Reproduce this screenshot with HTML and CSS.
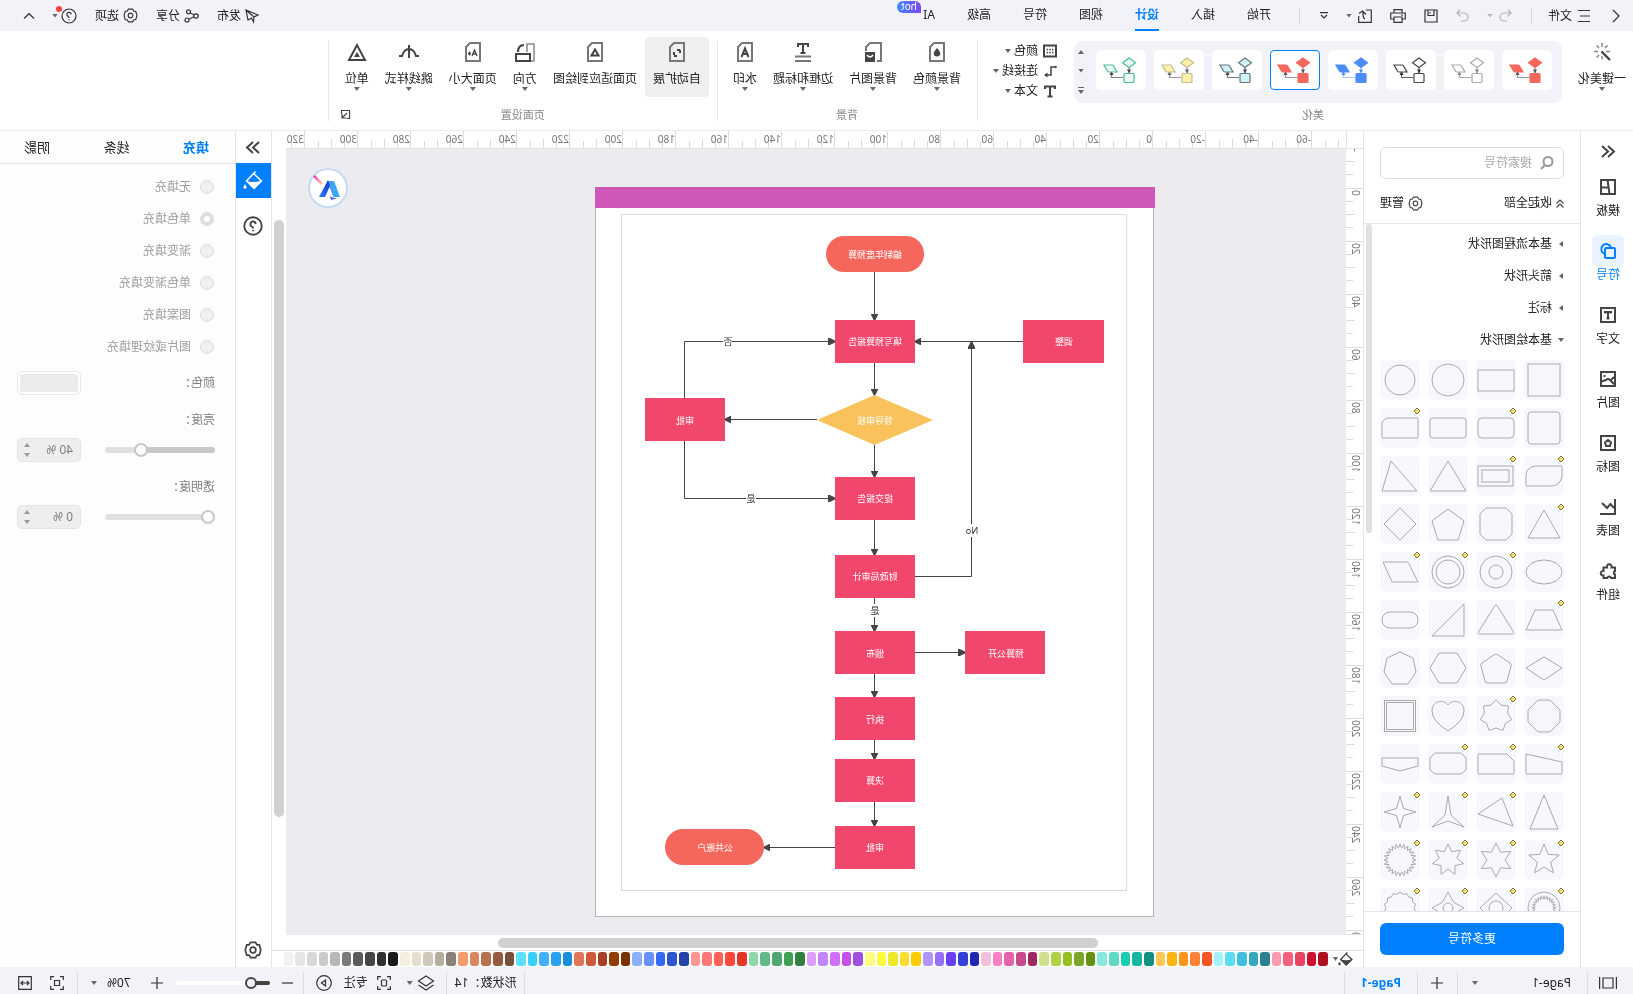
FILE: index.html
```html
<!DOCTYPE html>
<html lang="zh-CN">
<head>
<meta charset="utf-8">
<title>Page-1</title>
<link rel="stylesheet" href="styles.css">
</head>
<body>
<svg class="defs" aria-hidden="true">
  <symbol id="theme" viewBox="0 0 50 40">
    <g class="theme-line"><path d="M17 17V23M23 27.500H34.500V22"/><path class="theme-head" d="M15 19.500h4L17 23.500zM32.500 25h4L34.500 21z"/></g>
    <g class="theme-shape"><path d="M17 8l6.500 4.800L17 17.600l-6.500-4.800z"/><rect x="12" y="23.500" width="10" height="9" rx="1"/><path d="M42 15h-8q-1 0-1.500 1l-3.500 6h8q1 0 1.500-1z"/></g>
  </symbol>
  <symbol id="gear" viewBox="0 0 16 16"><path d="M5.800 1.200h4.400l1.400 2.300h2l1.300 4.500-1.300 4.500h-2l-1.400 2.300H5.800l-1.400-2.300h-2L1.100 8l1.300-4.500h2z"/><circle cx="8" cy="8" r="2.500"/></symbol>
  <symbol id="help" viewBox="0 0 16 16"><circle cx="8" cy="8" r="7"/><path d="M5.900 6.500a2.100 2.100 0 1 1 3 1.900q-.9.500-.9 1.500M8 11.200v1"/></symbol>
  <symbol id="sheet" viewBox="0 0 16 20"><path d="M1 1h10l4 4v14H1z"/></symbol>
  <symbol id="bucket" viewBox="0 0 20 20"><path d="M7.500 .5l2 2.500M9.500 2.500l7 7.500-7.500 7.500L1.500 10z"/><path class="solid" d="M2 9.500q7 3 15 0L9 18z"/><path class="solid" d="M18 13l1.400 2.400a1.600 1.600 0 1 1-2.800 0z"/></symbol>
</svg>

<div class="app">
  <header class="titlebar">
    <button class="icon-btn back" aria-label="返回"><svg width="8" height="12" viewBox="0 0 8 12"><path d="M7 0L1 6l6 6"/></svg></button>
    <button class="file-btn"><svg width="12" height="12" viewBox="0 0 12 12"><path d="M0 .5h12M0 6h10M0 11.500h12"/></svg>文件</button>
    <i class="sep"></i>
    <div class="quick">
      <button class="icon-btn pale" aria-label="撤销"><svg width="13" height="13" viewBox="0 0 13 13"><path d="M4 .5L1 4l3.500 3.500M1 4h7a4 4 0 0 1 0 8H5"/></svg><i class="caret"></i></button>
      <button class="icon-btn pale" aria-label="重做"><svg width="13" height="13" viewBox="0 0 13 13"><path d="M9 .5L12 4 8.500 7.500M12 4H5a4 4 0 0 0 0 8h3"/></svg></button>
      <button class="icon-btn" aria-label="保存"><svg width="14" height="14" viewBox="0 0 14 14"><path d="M1 1h12v12H1zM4 1v5.500h6V1M8 3v1.500"/></svg></button>
      <button class="icon-btn" aria-label="打印"><svg width="16" height="14" viewBox="0 0 16 14"><path d="M4 4V.7h8V4M4 10H.7V4h14.600v6H12M4 8h8v5.300H4zM3 6h2"/></svg></button>
      <button class="icon-btn" aria-label="导出"><svg width="14" height="14" viewBox="0 0 14 14"><path d="M6 1H.7v12.300h12.600V7M7 10q2-1 2-4.500V3M6 5.500L9.500 2 13 4.500"/></svg><i class="caret"></i></button>
      <button class="icon-btn" aria-label="更多"><svg width="8" height="7" viewBox="0 0 8 7"><path d="M0 .6h8M1 3l3 3 3-3"/></svg></button>
    </div>
    <i class="sep"></i>
    <nav class="tabs">
      <a href="#">开始</a><a href="#">插入</a><a href="#" class="active">设计</a><a href="#">视图</a><a href="#">符号</a><a href="#">高级</a><a href="#" class="ai">AI<span class="hot">hot</span></a>
    </nav>
    <div class="title-actions">
      <button><svg width="14" height="14" viewBox="0 0 14 14"><path d="M1 6L13 1 11 11 7.500 9 5.500 13 5 8zM13 1L5 8"/></svg>发布</button>
      <button><svg width="15" height="14" viewBox="0 0 15 14"><circle cx="3" cy="7" r="2.200"/><circle cx="10.500" cy="2.800" r="2"/><circle cx="12" cy="11" r="2"/><path d="M5 6l3.500-2M5 7.800l5 2.400"/></svg>分享</button>
      <button><svg width="15" height="15"><use href="#gear"/></svg>选项</button>
      <button class="help" aria-label="帮助"><svg width="16" height="16"><use href="#help"/></svg><i class="caret"></i><i class="dot"></i></button>
      <button aria-label="收起"><svg width="10" height="6" viewBox="0 0 10 6"><path d="M0 5.500L5 .7l5 4.800"/></svg></button>
    </div>
  </header>

  <section class="ribbon">
    <div class="group">
      <div class="group-body">
        <button class="tool beautify"><svg width="18" height="20" viewBox="0 0 18 20"><path d="M1 18L9.500 9.500" stroke-width="2.400"/><path d="M9 1v4M3.500 3.500L6 6M1 9.500h4M14.500 3.500L12 6M13 9.500h4M14.500 15.500L12 13M9 14v3.500" class="soft"/></svg>一键美化<i class="caret"></i></button>
        <div class="gallery">
          <button class="theme t-red" aria-label="主题1"><svg><use href="#theme"/></svg></button>
          <button class="theme t-light" aria-label="主题2"><svg><use href="#theme"/></svg></button>
          <button class="theme t-dark" aria-label="主题3"><svg><use href="#theme"/></svg></button>
          <button class="theme t-blue" aria-label="主题4"><svg><use href="#theme"/></svg></button>
          <button class="theme t-red selected" aria-label="主题5"><svg><use href="#theme"/></svg></button>
          <button class="theme t-cyan" aria-label="主题6"><svg><use href="#theme"/></svg></button>
          <button class="theme t-yellow" aria-label="主题7"><svg><use href="#theme"/></svg></button>
          <button class="theme t-green" aria-label="主题8"><svg><use href="#theme"/></svg></button>
          <div class="gallery-nav"><button class="caret up" aria-label="上"></button><button class="caret" aria-label="下"></button><button class="caret expand" aria-label="展开"></button></div>
        </div>
        <div class="stack">
          <button><svg width="14" height="14" viewBox="0 0 14 14"><path d="M1 1.500h12v11H1z" stroke-width="2"/><path d="M3.500 5.500h7M3.500 8.500h7" stroke-dasharray="1.500 1.200" stroke-width="1.500"/></svg>颜色<i class="caret"></i></button>
          <button><svg width="14" height="14" viewBox="0 0 14 14"><path d="M2.500 3H6v8h4" stroke-width="1.500"/><circle cx="1.500" cy="3" r="1.300" class="solid"/><path class="solid" d="M9.500 8.500l3.500 2.500-3.500 2.500z"/></svg>连接线<i class="caret"></i></button>
          <button><svg width="14" height="14" viewBox="0 0 14 14"><path d="M2 5V2.500h10V5M7 2v10M4.500 12.500h5" stroke-width="2"/></svg>文本<i class="caret"></i></button>
        </div>
      </div>
      <h2>美化</h2>
    </div>
    <div class="group">
      <div class="group-body">
        <button class="tool"><svg width="16" height="20"><use href="#sheet"/><path class="solid" d="M8 6q3.200 3.600 3.200 5.300a3.200 3.200 0 0 1-6.400 0Q4.800 9.600 8 6z"/></svg>背景颜色<i class="caret"></i></button>
        <button class="tool"><svg width="18" height="20" viewBox="0 0 18 20"><path class="mid" d="M5 19H1V1h11l4 4v4"/><path class="solid" d="M7 10h10v10H7z"/><path d="M9 13q3 4 6 0" stroke="#fff" stroke-width="1.500"/></svg>背景图片<i class="caret"></i></button>
        <button class="tool"><svg width="18" height="20" viewBox="0 0 18 20"><path d="M4 5V2h10v3M9 2v9M6.500 11h5"/><path class="mid" d="M1 14.500h16M1 19h16"/></svg>边框和标题<i class="caret"></i></button>
        <button class="tool"><svg width="16" height="20"><use href="#sheet"/><path d="M4.500 15L8 6.500l3.500 8.500M6 12h4"/></svg>水印<i class="caret"></i></button>
      </div>
      <h2>背景</h2>
    </div>
    <div class="group page-group">
      <div class="group-body">
        <button class="tool on"><svg width="16" height="20"><use href="#sheet"/><path d="M5 13v-3M11 8v3M11 8H8M5 14h3" transform="matrix(-1 0 0 1 16 0)"/></svg>自动扩展</button>
        <button class="tool"><svg width="16" height="20"><use href="#sheet"/><path d="M8 7.500l3.500 6h-7z"/></svg>页面适应到绘图</button>
        <button class="tool"><svg width="20" height="20" viewBox="0 0 20 20"><path class="soft" d="M5 19H1V2h7v8"/><path d="M5 12h14v7H5zM11 3q6 0 6 7"/></svg>方向<i class="caret"></i></button>
        <button class="tool"><svg width="16" height="20"><use href="#sheet"/><path d="M4 14l2.500-6L9 14M5 12h3M10 11.500h3M11.500 9.500v4" stroke-width="1.300"/></svg>页面大小<i class="caret"></i></button>
        <button class="tool"><svg width="20" height="20" viewBox="0 0 20 20"><path d="M0 14h3q2-7 7-7t7 7h3M10 3v13"/></svg>跳线样式<i class="caret"></i></button>
        <button class="tool"><svg width="20" height="20" viewBox="0 0 20 20"><path d="M10 3l8 15H2z"/><path class="solid" d="M10 10l3 5H7z"/></svg>单位<i class="caret"></i></button>
      </div>
      <h2>页面设置</h2>
      <button class="launcher" aria-label="页面设置对话框"><svg width="9" height="9" viewBox="0 0 9 9"><path d="M4 .5H.5v8h3M4 .5h4.500V4M3 3l4.500 4.500M8 4v4H4"/></svg></button>
    </div>
  </section>

  <main class="main">
    <nav class="rail">
      <button class="fold" aria-label="折叠"><svg width="14" height="13" viewBox="0 0 14 13"><path d="M7 1L1 6.500 7 12M13 1L7 6.500l6 5.500"/></svg></button>
      <button class="rail-item"><span><svg viewBox="0 0 16 16"><path d="M1 1h14v14H1zM8.500 1L6.500 15M8 8.500h7"/></svg></span>模板</button>
      <button class="rail-item active"><span><svg viewBox="0 0 16 16"><rect x="1" y="5" width="10" height="10" rx="1"/><path d="M5 4.500a5 5 0 1 1 6.500 6.300"/></svg></span>符号</button>
      <button class="rail-item"><span><svg viewBox="0 0 16 16"><path d="M1 1h14v14H1zM5 6.500V5h6v1.500M8 5v6.500M6.500 11.500h3"/></svg></span>文字</button>
      <button class="rail-item"><span><svg viewBox="0 0 16 16"><path d="M1 1h14v14H1zM2 6l4 4M2 13l4-4q2-2 4 0l5 1.500M11.500 4v2"/></svg></span>图片</button>
      <button class="rail-item"><span><svg viewBox="0 0 16 16"><path d="M1 1h14v14H1zM8 5l3 2.300-1 3.700H6L5 7.300z"/></svg></span>图标</button>
      <button class="rail-item"><span><svg viewBox="0 0 16 16"><path d="M1 0v15h15M2 9l3.500-4 3.500 4 5-5"/></svg></span>图表</button>
      <button class="rail-item"><span><svg viewBox="0 0 16 16"><path d="M2 4.500h3.500a2.400 2.400 0 1 1 4.500 0h3.500V8a2.300 2.300 0 1 1 0 4.500V15H9.700a2 2 0 0 0-3.800 0H2v-3.500a1.900 1.900 0 0 0 0-3.500z" transform="translate(-1 0)"/></svg></span>组件</button>
    </nav>

    <aside class="symbols">
      <div class="symbols-top">
        <label class="search"><svg width="14" height="14" viewBox="0 0 14 14"><circle cx="6" cy="5.500" r="4.500"/><path d="M9 9l4 4"/></svg><input type="text" placeholder="搜索符号" aria-label="搜索符号"></label>
        <div class="symbols-actions">
          <button><svg width="8" height="9" viewBox="0 0 8 9"><path d="M.5 4.500L4 1l3.500 3.500M.5 8.500L4 5l3.500 3.500"/></svg>收起全部</button>
          <button><svg width="15" height="15"><use href="#gear"/></svg>管理</button>
        </div>
      </div>
      <div class="library">
        <div class="library-list">
          <button class="cat"><i></i>基本流程图形状</button>
          <button class="cat"><i></i>箭头形状</button>
          <button class="cat"><i></i>标注</button>
          <button class="cat open"><i></i>基本绘图形状</button>
          <div class="tiles" id="tiles"></div>
        </div>
        <i class="thumb"></i>
      </div>
      <div class="more"><button>更多符号</button></div>
    </aside>

    <section class="workspace">
      <i class="corner"></i>
      <div class="ruler-h"><div class="ticks" id="ruler-h"></div></div>
      <div class="ruler-v"><div class="ticks" id="ruler-v"></div></div>
      <div class="canvas">
        <svg class="page" width="560" height="731" viewBox="0 0 560 731">
          <defs><marker id="arrow" viewBox="0 0 7 7" refX="6.500" refY="3.500" markerWidth="7" markerHeight="7" markerUnits="userSpaceOnUse" orient="auto"><path d="M0 0l7 3.500L0 7z" fill="#444"/></marker></defs>
          <rect x=".5" y=".5" width="558" height="729" fill="#fff" stroke="#b4b4b8"/>
          <rect x="27.500" y="27.500" width="505" height="676" fill="none" stroke="#dcdcdc"/>
          <g fill="#cf57b6"><rect x="-1" width="560" height="21"/></g>
          <g class="wires">
            <path d="M279.500 85V133"/><path d="M279.500 176V208"/><path d="M279.500 258V290"/><path d="M279.500 333V368"/><path d="M279.500 411V444"/><path d="M279.500 487V510"/><path d="M279.500 553V572"/><path d="M279.500 615V639"/>
            <path d="M131 154.500H239"/><path d="M337 232.500H429"/><path d="M469.500 211V154.500H319"/><path d="M469.500 254V311.500H319"/><path d="M239 389.500H182.500V155"/><path d="M239 465.500H189"/><path d="M319 660.500H390"/>
          </g>
          <g fill="#fff"><rect x="422" y="148" width="9" height="13"/><rect x="398" y="305" width="10" height="13"/><rect x="274" y="417" width="11" height="13"/><rect x="175" y="337" width="15" height="13"/></g>
          <g fill="#f5665d"><rect x="230" y="49" width="98" height="36" rx="18"/><rect x="390" y="642" width="99" height="36" rx="18"/></g>
          <path d="M279.500 208L337 233l-57.500 25L221 233z" fill="#f9c25c"/>
          <g fill="#f2476c"><rect x="50" y="133" width="81" height="43"/><rect x="239" y="133" width="80" height="43"/><rect x="429" y="211" width="80" height="43"/><rect x="239" y="290" width="80" height="43"/><rect x="239" y="368" width="80" height="43"/><rect x="239" y="444" width="80" height="43"/><rect x="109" y="444" width="80" height="43"/><rect x="239" y="510" width="80" height="43"/><rect x="239" y="572" width="80" height="43"/><rect x="239" y="639" width="80" height="43"/></g>
          <g class="node-text">
            <text x="279" y="71">编制年度预算</text><text x="279" y="158">填写预算报告</text><text x="90" y="158">调整</text><text x="279" y="237">领导审核</text><text x="469" y="237">审批</text><text x="279" y="315">提交报告</text><text x="279" y="393">财政局审计</text><text x="279" y="470">颁布</text><text x="148" y="470">预算公开</text><text x="279" y="536">执行</text><text x="279" y="597">决算</text><text x="279" y="664">审批</text><text x="439" y="664">公共账户</text>
          </g>
          <g class="node-text wire-text"><text x="426" y="158">否</text><text x="403" y="315">是</text><text x="279" y="427">是</text><text x="182" y="347">No</text></g>
        </svg>
        <button class="ai-logo" aria-label="AI">
          <svg width="40" height="40" viewBox="0 0 40 40">
            <defs><linearGradient id="pen" x1="1" x2="0" y2="1"><stop offset="0" stop-color="#ff35d0"/><stop offset="1" stop-color="#ffd0a0"/></linearGradient><linearGradient id="leg" x1="0" x2="1" y2="1"><stop offset="0" stop-color="#1a35c8"/><stop offset="1" stop-color="#2f7bff"/></linearGradient></defs>
            <path d="M14 13h7l-6.500 16H8z" fill="#3fa5fa"/><path d="M20 12l9 17h-6l-5-11z" fill="url(#leg)"/><path d="M11 30q5 0 7-2l-1 4q-4-1-6-2z" fill="#3c64e8"/><path d="M34 8L26 16" stroke="url(#pen)" stroke-width="2.500" fill="none"/>
          </svg>
        </button>
      </div>
      <div class="scroll-v"><i></i></div>
      <div class="scroll-h"><i></i></div>
      <div class="palette"><button class="fill-btn" aria-label="填充颜色"><svg width="15" height="15"><use href="#bucket"/></svg><i class="caret"></i></button><div class="colors" id="colors"></div></div>
    </section>

    <nav class="rail-right">
      <button aria-label="折叠"><svg width="14" height="13" viewBox="0 0 14 13"><path d="M1 1l6 5.500L1 12M7 1l6 5.500L7 12"/></svg></button>
      <button class="active" aria-label="样式"><svg width="20" height="20"><use href="#bucket"/></svg></button>
      <button class="q" aria-label="帮助"><svg width="20" height="20"><use href="#help"/></svg></button>
      <button class="bottom" aria-label="设置"><svg width="18" height="18"><use href="#gear"/></svg></button>
    </nav>

    <aside class="props">
      <div class="prop-tabs"><button class="active">填充</button><button>线条</button><button>阴影</button></div>
      <fieldset class="radios">
        <label><input type="radio" name="fill" disabled>无填充</label>
        <label><input type="radio" name="fill" disabled checked>单色填充</label>
        <label><input type="radio" name="fill" disabled>渐变填充</label>
        <label><input type="radio" name="fill" disabled>单色渐变填充</label>
        <label><input type="radio" name="fill" disabled>图案填充</label>
        <label><input type="radio" name="fill" disabled>图片或纹理填充</label>
      </fieldset>
      <div class="prop-row"><span>颜色：</span><button class="swatch" aria-label="颜色"></button></div>
      <label class="prop-label" for="bright">亮度：</label>
      <div class="prop-row slim"><input class="slider s-mid" id="bright" type="range" min="-100" max="100" value="40"><div class="spin"><input type="text" value="40 %" aria-label="亮度值"><span><i class="caret up"></i><i class="caret"></i></span></div></div>
      <label class="prop-label" for="alpha">透明度：</label>
      <div class="prop-row slim"><input class="slider" id="alpha" type="range" min="0" max="100" value="0"><div class="spin"><input type="text" value="0 %" aria-label="透明度值"><span><i class="caret up"></i><i class="caret"></i></span></div></div>
    </aside>
  </main>

  <footer class="status">
    <button class="s-view" aria-label="页面视图"><svg width="18" height="12" viewBox="0 0 18 12"><path d="M.6 0v12M17.400 0v12M4 1h10v10H4z"/></svg></button>
    <button class="s-select">Page-1<i class="caret"></i></button>
    <button class="s-add" aria-label="新建页面"><svg width="12" height="12" viewBox="0 0 12 12"><path d="M6 0v12M0 6h12"/></svg></button>
    <button class="s-page">Page-1</button>
    <span class="s-count">形状数：14</span>
    <div class="s-tools">
      <button aria-label="图层"><svg width="18" height="16" viewBox="0 0 18 16"><path d="M9 1l7.500 5L9 11 1.500 6zM1.500 10L9 15l7.500-5"/></svg><i class="caret"></i></button>
      <button class="focus"><svg width="14" height="14" viewBox="0 0 14 14"><path d="M4 .7H.7V4M10 .7h3.300V4M4 13.300H.7V10M10 13.300h3.300V10"/><rect x="4.500" y="4" width="5" height="6" rx="1"/></svg>专注</button>
      <button aria-label="播放"><svg width="16" height="16" viewBox="0 0 16 16"><circle cx="8" cy="8" r="7.300"/><path d="M6.500 5l4 3-4 3z"/></svg></button>
    </div>
    <div class="s-zoom">
      <button aria-label="缩小"><svg width="11" height="12" viewBox="0 0 11 12"><path d="M0 6h11"/></svg></button>
      <input class="zoom" type="range" min="0" max="100" value="15" aria-label="缩放">
      <button aria-label="放大"><svg width="12" height="12" viewBox="0 0 12 12"><path d="M6 0v12M0 6h12"/></svg></button>
      <button class="pct">70%<i class="caret"></i></button>
    </div>
    <div class="s-fit">
      <button aria-label="适应页面"><svg width="14" height="14" viewBox="0 0 14 14"><path d="M4 .7H.7V4M10 .7h3.300V4M4 13.300H.7V10M10 13.300h3.300V10M4.500 4.500h5v5h-5z"/></svg></button>
      <button aria-label="适应宽度"><svg width="14" height="14" viewBox="0 0 14 14"><path d="M.7.7h12.600v12.600H.7zM3 7h8M5 5L3 7l2 2M9 5l2 2-2 2"/></svg></button>
    </div>
  </footer>
</div>
<script src="script.js"></script>
</body>
</html>
```

FILE: styles.css
```css
* { box-sizing: border-box; }
body { margin: 0; font: 12px/16px "Noto Sans", "Noto Sans CJK SC", sans-serif; color: #222; overflow: hidden; }
button, input { font: inherit; color: inherit; border: 0; padding: 0; margin: 0; background: none; }
i { font-style: normal; }
svg { display: block; flex: none; fill: none; stroke: #444; stroke-width: 1.2; overflow: visible; }
.defs { position: absolute; width: 0; height: 0; }
.solid { fill: #444; stroke: none; }

/* Mirrored interface: everything is laid out left to right, then flipped as a whole. */
.app { display: grid; grid-template-rows: 31px 100px minmax(0, 1fr) 27px; height: 100vh; background: #fff; transform: scaleX(-1); }

.caret { display: block; flex: none; width: 6px; height: 4px; background: #666; clip-path: polygon(0 0, 100% 0, 50% 100%); }
.caret.up { clip-path: polygon(50% 0, 100% 100%, 0 100%); }

/* Title bar */
.titlebar { display: flex; align-items: center; background: #f2f3f9; padding-left: 13px; }
.titlebar button { display: flex; align-items: center; }
.titlebar svg { stroke: #333; }
.file-btn { gap: 6px; margin-left: 22px; margin-right: 16px; }
.sep { width: 1px; height: 16px; background: #d6d7dc; }
.quick { display: flex; align-items: center; gap: 18px; padding: 0 20px 0 19px; }
.quick .icon-btn { gap: 6px; }
.quick .pale svg { stroke: #b4b4b8; }
.quick .pale .caret { background: #b4b4b8; }
.tabs { display: flex; align-self: stretch; gap: 32px; margin-left: 28px; }
.tabs a { position: relative; display: flex; align-items: center; color: #222; text-decoration: none; border-bottom: 2px solid transparent; border-top: 1px solid transparent; }
.tabs .active { color: #0080ff; font-weight: 700; border-bottom-color: #0080ff; }
.hot { position: absolute; left: 14px; top: 0; width: 24px; height: 12px; border-radius: 6px 6px 6px 0; background: linear-gradient(90deg, #7a48ff, #3f86ff); color: #fff; font-size: 10px; line-height: 11px; text-align: center; }
.title-actions { display: flex; align-items: center; gap: 18px; margin-left: auto; padding-right: 24px; }
.title-actions button { gap: 4px; }
.title-actions .help { position: relative; gap: 3px; }
.dot { position: absolute; left: 15px; top: -2px; width: 6px; height: 6px; border-radius: 3px; background: #ff4040; }

/* Ribbon */
.ribbon { display: flex; border-bottom: 1px solid #ececee; }
.group { position: relative; display: flex; flex-direction: column; justify-content: space-between; padding: 6px 8px 7px; }
.group::after { content: ""; position: absolute; right: 0; top: 10px; bottom: 9px; width: 1px; background: #e6e6e8; }
.group:first-child { padding-left: 0; padding-right: 16px; }
.page-group { padding-right: 9px; }
.group-body { display: flex; align-items: flex-start; }
.group h2 { margin: 0; text-align: center; font-size: 11px; font-weight: 400; color: #888; }
.tool { display: flex; flex-direction: column; align-items: center; height: 60px; padding: 5px 8px 0; border-radius: 4px; white-space: nowrap; }
.tool svg { stroke-width: 2; margin-bottom: 9px; }
.tool use, .mid { stroke: #777; }
.tool .soft { stroke: #888; stroke-width: 1.500; }
.tool .solid { stroke: none; }
.tool.on { background: #efeff0; }
.beautify { padding: 5px 8px 0 7px; }
.gallery { display: flex; gap: 8px; margin: 4px 17px 0 8px; padding: 9px 0 9px 10px; background: #f2f3f9; border-radius: 8px; }
.theme { width: 50px; height: 40px; border-radius: 4px; background: #fff; border: 1px solid #fff; display: flex; align-items: center; justify-content: center; }
.theme svg { width: 50px; height: 40px; stroke-width: 1.2; }
.theme-shape { fill: var(--fill); stroke: var(--edge); }
.theme-line { stroke: var(--line); fill: none; }
.theme-head { fill: var(--head); stroke: none; }
.t-red { --fill: #f5665d; --edge: #f5665d; --line: #999; --head: #555; }
.t-light { --fill: #fff; --edge: #aaa; --line: #aaa; --head: #888; }
.t-dark { --fill: #fff; --edge: #444; --line: #666; --head: #333; }
.t-blue { --fill: #4a8df8; --edge: #4a8df8; --line: #a8c8fc; --head: #4a8df8; }
.t-cyan { --fill: #cff2f7; --edge: #66787c; --line: #777; --head: #444; }
.t-yellow { --fill: #fdf0a8; --edge: #c4bc94; --line: #999; --head: #666; }
.t-green { --fill: #eefaf6; --edge: #46bd98; --line: #888; --head: #444; }
.theme.selected { border-color: #0080ff; }
.gallery-nav { display: flex; flex-direction: column; align-items: center; justify-content: space-between; width: 14px; height: 44px; align-self: center; }
.gallery-nav .expand { height: 7px; clip-path: polygon(0 0, 100% 0, 100% 14%, 0 14%, 0 43%, 100% 43%, 50% 100%, 0 43%); }
.stack { display: flex; flex-direction: column; gap: 4px; padding-top: 6px; }
.stack button { display: flex; align-items: center; gap: 5px; height: 16px; }
.stack .caret { margin-left: -2px; }
.launcher { position: absolute; right: 13px; bottom: 11px; }

/* Main area */
.main { display: grid; grid-template-columns: 53px 217px minmax(0, 1fr) 37px 235px; min-height: 0; }
.rail { display: flex; flex-direction: column; align-items: center; border-right: 1px solid #e4e4e8; padding: 14px 2px 0 0; }
.rail svg { stroke-width: 2; }
.fold { margin-bottom: 13px; }
.rail-item { display: flex; flex-direction: column; align-items: center; height: 64px; flex: none; }
.rail-item span { display: grid; place-items: center; width: 32px; height: 32px; border-radius: 6px; }
.rail-item svg { width: 16px; height: 16px; }
.rail-item.active { color: #0080ff; }
.rail-item.active span { background: #e8f3ff; }
.rail-item.active svg { stroke: #0080ff; }

.symbols { display: flex; flex-direction: column; border-right: 1px solid #e4e4e8; min-height: 0; }
.symbols-top { padding: 16px 16px 12px; border-bottom: 1px solid #e4e4e8; }
.search { display: flex; align-items: center; gap: 8px; height: 32px; padding: 0 9px; border: 1px solid #dedfe2; border-radius: 6px; }
.search svg { stroke: #999; stroke-width: 2; }
.search input { width: 100%; outline: 0; }
.search input::placeholder { color: #aaa; }
.symbols-actions { display: flex; justify-content: space-between; margin-top: 16px; }
.symbols-actions button { display: flex; align-items: center; gap: 4px; }
.library { position: relative; flex: 1; min-height: 0; overflow: hidden; }
.library-list { padding: 4px 16px 0; }
.cat { display: flex; align-items: center; width: 100%; height: 32px; gap: 6px; }
.cat i { width: 4px; height: 6px; margin: 0 1px; background: #666; clip-path: polygon(0 0, 100% 50%, 0 100%); }
.cat.open i { width: 6px; height: 4px; margin: 0; clip-path: polygon(0 0, 100% 0, 50% 100%); }
.thumb { position: absolute; right: 2px; top: 0; width: 6px; height: 45%; border-radius: 3px; background: #dfdfe4; }
.tiles { display: grid; grid-template-columns: repeat(4, 40px); justify-content: space-between; gap: 8px; margin-top: 4px; }
.tile { width: 40px; height: 40px; border-radius: 5px; background: #f7f8fc; }
.tile svg { stroke: #aaa; stroke-width: 1; }
.tile .mark { fill: #ffe252; stroke: #777; }
.more { flex: none; padding: 11px 16px 12px; border-top: 1px solid #e4e4e8; }
.more button { width: 100%; height: 32px; border-radius: 6px; background: #0080ff; color: #fff; }

/* Workspace */
.workspace { display: grid; grid-template-columns: 17px minmax(0, 1fr) 14px; grid-template-rows: 18px minmax(0, 1fr) 15px 17px; min-width: 0; min-height: 0; }
.corner { border-right: 1px solid #e2e2e4; border-bottom: 1px solid #e2e2e4; }
.ruler-h { overflow: hidden; border-bottom: 1px solid #e2e2e4; color: #777; font-size: 10px; line-height: 16px; }
.ruler-h .ticks { display: flex; margin-left: -19px; height: 100%; }
.tick { flex: none; border: 0 solid #dcdce0; }
.ruler-h .tick { width: 53px; border-left-width: 1px; background: linear-gradient(#dcdce0, #dcdce0) 12px 100% / 1px 7px, linear-gradient(#dcdce0, #dcdce0) 25px 100% / 1px 9px, linear-gradient(#dcdce0, #dcdce0) 38px 100% / 1px 7px; background-repeat: no-repeat; }
.ruler-v { grid-column: 1; overflow: hidden; border-bottom: 1px solid #e2e2e4; color: #777; font-size: 10px; line-height: 14px; }
.ruler-v .ticks { margin-top: -14px; }
.ruler-v .tick { display: flex; align-items: flex-start; height: 53px; border-top-width: 1px; padding-top: 1px; background: linear-gradient(#dcdce0, #dcdce0) 100% 12px / 7px 1px, linear-gradient(#dcdce0, #dcdce0) 100% 25px / 9px 1px, linear-gradient(#dcdce0, #dcdce0) 100% 38px / 7px 1px; background-repeat: no-repeat; }
.ruler-v .tick span { writing-mode: vertical-rl; transform: rotate(180deg); }
.canvas { position: relative; overflow: hidden; background: #ebebf0; }
.page { position: absolute; left: 192px; top: 38px; }
.wires path { stroke: #444; stroke-width: 1; marker-end: url(#arrow); }
.page rect { stroke-width: 1; }
.page g > rect, .page > path { stroke: none; }
.node-text { fill: #fff; stroke: none; font-size: 9px; text-anchor: middle; }
.wire-text { fill: #333; }
.ai-logo { position: absolute; right: 22px; top: 19px; width: 40px; height: 40px; border-radius: 20px; background: #fff; box-shadow: inset 0 0 0 2px #c5daf2; }
.ai-logo svg { stroke: none; }
.scroll-v i { display: block; width: 10px; height: 76%; margin: 71px 0 0 2px; border-radius: 5px; background: #d0d1d3; }
.scroll-h { grid-column: 2; padding: 3px 226px 0 248px; }
.scroll-h i { display: block; height: 10px; margin-right: -14px; border-radius: 5px; background: #d0d1d3; }
.palette { grid-column: 1 / -1; display: flex; align-items: center; border-top: 1px solid #e2e2e4; padding-left: 10px; }
.fill-btn { display: flex; align-items: center; width: 25px; flex: none; }
.fill-btn .caret { width: 5px; }
.fill-btn svg { stroke-width: 1.8; }
.colors { display: flex; flex: 1; gap: 2px; height: 14px; min-width: 0; }
.colors i { flex: 1; border-radius: 3px; }

.rail-right { display: flex; flex-direction: column; border: 1px solid #e4e4e8; border-width: 0 1px; }
.rail-right button { display: grid; place-items: center; height: 35px; }
.rail-right button:first-child { height: 32px; }
.rail-right svg { stroke-width: 1.5; }
.rail-right button:first-child svg { stroke-width: 2; }
.rail-right .active { background: #0080ff; }
.rail-right .active svg { stroke: #fff; }
.active use { --ink: #fff; }
#bucket .solid { fill: var(--ink, #444); }
.rail-right .q { margin-top: 10px; }
.rail-right .bottom { margin-top: auto; }

/* Property panel */
.props { background: #fdfdfd; min-width: 0; }
.prop-tabs { display: flex; justify-content: space-between; height: 33px; padding: 0 24px 0 26px; border-bottom: 1px solid #e4e4e8; font-size: 13px; }
.prop-tabs .active { color: #0080ff; font-weight: 700; }
.radios { border: 0; margin: 0; padding: 7px 0 0 21px; }
.radios label { display: flex; align-items: center; gap: 9px; height: 32px; color: #a0a0a0; }
.radios input { appearance: none; width: 14px; height: 14px; border-radius: 7px; border: 1px solid #dedede; background: #f0f0f0; }
.radios input:checked { border: 4px solid #dedede; background: #fff; }
.prop-row { display: flex; align-items: center; justify-content: space-between; height: 40px; padding: 0 17px 0 20px; color: #808080; }
.prop-row.slim { height: 24px; }
.prop-label { display: block; padding: 9px 0 10px 20px; color: #808080; }
.prop-label + .slim + .prop-label { padding-top: 17px; }
.swatch { width: 64px; height: 24px; border: 1px solid #e8e8e8; border-radius: 5px; background: #ececec; box-shadow: inset 0 0 0 2px #fff; }
.slider { appearance: none; width: 110px; height: 14px; }
.slider::-webkit-slider-runnable-track { height: 6px; border-radius: 3px; background: #e0e0e0; }
.s-mid::-webkit-slider-runnable-track { background: linear-gradient(90deg, #c8c8c8 67%, #e0e0e0 67%); }
.slider::-webkit-slider-thumb { appearance: none; width: 14px; height: 14px; margin-top: -4px; border: 2px solid #c8c8c8; border-radius: 7px; background: #fff; }
.spin { display: flex; align-items: center; width: 64px; height: 24px; padding: 0 6px 0 7px; border: 1px solid #e4e4e4; border-radius: 5px; background: #eee; }
.spin input { width: 43px; }
.spin span { display: flex; flex-direction: column; gap: 6px; }
.spin .caret { background: #999; }

/* Status bar */
.status { display: flex; align-items: center; background: #f2f3f9; padding-top: 5px; white-space: nowrap; }
.status > * { display: flex; align-items: center; align-self: stretch; border-right: 1px solid #dcdde3; }
.status svg { stroke: #333; }
.s-view { padding: 0 11px 0 16px; }
.s-select { width: 130px; padding: 0 14px 0 16px; justify-content: space-between; }
.s-add { padding: 0 13px 0 14px; }
.s-page { padding: 0 16px; color: #0080ff; font-weight: 700; }
.s-count { margin-left: auto; padding: 0 8px; border-left: 1px solid #dcdde3; }
.s-tools { gap: 12px; padding: 0 12px 0 11px; }
.s-tools button, .s-zoom button { display: flex; align-items: center; gap: 4px; }
.focus { margin-left: 4px; }
.s-tools .focus { gap: 9px; }
.s-zoom { gap: 12px; padding: 0 13px 0 10px; }
.s-zoom .pct { gap: 10px; margin-left: 8px; }
.zoom { appearance: none; width: 95px; height: 12px; background: none; }
.zoom::-webkit-slider-runnable-track { height: 4px; border-radius: 2px; background: linear-gradient(90deg, #444 20%, #fff 20%); }
.zoom::-webkit-slider-thumb { appearance: none; width: 12px; height: 12px; margin-top: -4px; border: 2px solid #444; border-radius: 6px; background: #f2f3f9; }
.status .s-fit { border-right: 0; gap: 18px; padding: 0 18px 0 13px; }
```

FILE: script.js
```js
// Rulers: one cell for every 20 units. Cells below `first` carry ticks only.
const ticks = (id, from, to, first = from) => {
  let html = '';
  for (let v = from; v <= to; v += 20) html += `<div class="tick"><span>${v < first ? '' : v}</span></div>`;
  document.getElementById(id).innerHTML = html;
};
ticks('ruler-h', -80, 320, -60);
ticks('ruler-v', -20, 280);

// Palette, five shades for each hue, then the greys.
const colors = `b01020 d01030 e94560 f56080 f99bb0 2a8090 35a8c0 40c0e0 5cdcf0 a5f0fc
f55525 ff8035 ff9518 fdb512 ffc658 159080 18b5a0 1accb0 60d8c5 85eadb
689010 7ba528 98bf20 b0d045 d0e08c a02860 c84a8c e565a8 fa80c5 f3c0dc
2028b0 3440d8 6840f5 9570f8 b095f8 fccc00 fddc30 f0e828 fff840 fffc85
a050e0 c850e8 d070f8 c085ff dc9fff 308040 40a058 50a870 62b985 8fd8aa
e53528 ff4838 ff6058 ff7878 ff9690 2540a8 2c55d0 3568f5 6890ff 8cb0f8
7a3000 943c00 a84025 d05a38 e07855 1a8cd8 2aa0f0 40b0ff 38d0ff 60e0ff
785038 965c40 b87050 d88860 f79a6c 8c8078 b5ae9c cec9b8 e4decf f5eedd
1a1a1a 303030 454545 5c5c5c 7a7a7a b8b8b8 cacaca d8d8d8 e6e6e6 f2f2f2 ffffff`.split(/\s+/);
document.getElementById('colors').innerHTML = colors.map(c => `<i style="background:#${c}"></i>`).join('');

// Shape thumbnails on a 40 x 40 tile.
const poly = pts => `<polygon points="${pts}"/>`;
const circle = r => `<circle cx="20" cy="20" r="${r}"/>`;
const rect = (x, y, w, h, r = 0) => `<rect x="${x}" y="${y}" width="${w}" height="${h}" rx="${r}"/>`;
const star = (n, R, r) => {
  const pts = [];
  for (let i = 0; i < n * 2; i++) {
    const a = Math.PI * i / n - Math.PI / 2, d = i % 2 ? r : R;
    pts.push((20 + d * Math.cos(a)).toFixed(1) + ',' + (20 + d * Math.sin(a)).toFixed(1));
  }
  return poly(pts.join(' '));
};
const path = d => `<path d="${d}"/>`;
const shapes = [
  [rect(4, 4, 32, 32)], [rect(2, 10, 36, 21)], [circle(16)], [circle(15)],
  [rect(4, 4, 32, 32, 3)], [rect(2, 10, 36, 20, 4), 1], [rect(2, 10, 36, 20, 3)], [path('M2 10H32Q38 11 38 17V30H2z'), 1],
  [path('M2 10H28Q38 11 38 20V30H12Q3 29 2 20z'), 1], [rect(3, 10, 35, 20) + rect(7, 14, 27, 12), 1], [poly('20,5 38,35 2,35')], [poly('29,5 38,35 3,35')],
  [poly('20,6 36,34 4,34'), 1], [poly('10,4 30,4 36,10 36,30 30,36 10,36 4,30 4,10')], [poly('20,5 36,17 30,36 10,36 4,17')], [poly('20,4 36,20 20,36 4,20')],
  ['<ellipse cx="20" cy="20" rx="18" ry="12"/>'], [circle(16) + circle(7), 1], [circle(16) + circle(12), 1], [poly('12,10 37,10 28,30 2,30'), 1],
  [poly('11,10 29,10 38,30 2,30'), 1], [path('M18 7Q20 3 22 7L37 31Q39 34 36 34H4Q1 34 3 31z')], [poly('4,4 4,36 36,36')], [rect(2, 12, 36, 16, 8)],
  [poly('20,9 38,20 20,32 2,20')], [path('M18 7Q20 5 22 7L34 15Q36 16 35 18L31 33Q31 35 29 35H11Q9 35 9 33L5 18Q4 16 6 15z')], [poly('2,20 11,5 29,5 38,20 29,35 11,35')], [poly('20,4 33,10 36,24 28,36 12,36 4,24 7,10')],
  [poly('14,4 26,4 36,14 36,26 26,36 14,36 4,26 4,14')], [star(7, 16, 12), 1], [path('M20 9C24 3 36 4 36 15Q36 25 20 35Q4 25 4 15C4 4 16 3 20 9z')], [rect(4.5, 4.5, 31, 31) + rect(6.5, 6.5, 27, 27)],
  [poly('38,10 2,18 2,30 38,30'), 1], [poly('9,10 38,10 38,30 2,30 2,17'), 1], [poly('7,9 33,9 38,14 38,26 33,30 7,30 2,26 2,14'), 1], [poly('2,14 38,14 38,22 20,27 2,22')],
  [poly('20,3 34,37 6,37')], [poly('38,22 14,6 3,34'), 1], [poly('20,4 23,23 36,35 20,29 4,35 17,23'), 1], [star(4, 16, 5), 1],
  [star(5, 16, 7), 1], [star(6, 17, 9), 1], [star(7, 16, 9), 1], [star(24, 16, 12), 1],
  [circle(16) + star(24, 12, 9), 1], [poly('20,5 36,20 20,36 4,20') + circle(7), 1], [star(4, 16, 8) + circle(5), 1], [star(14, 16, 14), 1]
];
document.getElementById('tiles').innerHTML = shapes.map(([art, mark]) =>
  `<div class="tile"><svg width="40" height="40" viewBox="0 0 40 40">${art}${mark ? '<path class="mark" d="M3 0l3 3-3 3-3-3z"/>' : ''}</svg></div>`).join('');
```
